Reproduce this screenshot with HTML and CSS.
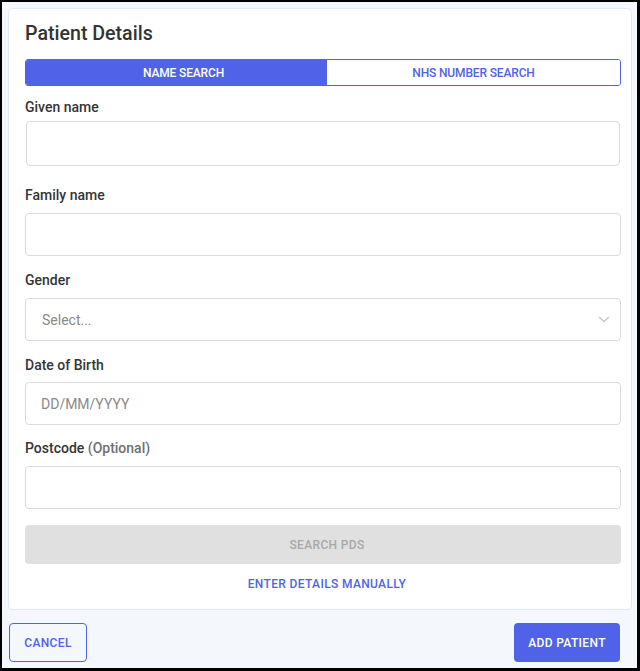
FILE: index.html
```html
<!DOCTYPE html>
<html>
<head>
<meta charset="utf-8">
<link rel="stylesheet" href="styles.css">
</head>
<body>
<div class="frame">
  <div class="card">
    <h1 class="title">Patient Details</h1>
    <div class="toggle">
      <div class="tab tab-active">NAME SEARCH</div>
      <div class="tab">NHS NUMBER SEARCH</div>
    </div>
    <div class="field field-first">
      <div class="label label-tight">Given name</div>
      <div class="input input-tall"></div>
    </div>
    <div class="field field-wide">
      <div class="label">Family name</div>
      <div class="input"></div>
    </div>
    <div class="field">
      <div class="label">Gender</div>
      <div class="input select">
        <span class="placeholder">Select...</span>
        <svg class="chev" width="12" height="8" viewBox="0 0 12 8"><polyline points="1.5,1.5 6,5.5 10.5,1.5" fill="none" stroke="#c9c9c9" stroke-width="1.6" stroke-linecap="round" stroke-linejoin="round"/></svg>
      </div>
    </div>
    <div class="field">
      <div class="label label-dob">Date of Birth</div>
      <div class="input"><span class="placeholder ph-dob">DD/MM/YYYY</span></div>
    </div>
    <div class="field field-post">
      <div class="label">Postcode <span class="optional">(Optional)</span></div>
      <div class="input"></div>
    </div>
    <div class="search-btn">SEARCH PDS</div>
    <div class="manual">ENTER DETAILS MANUALLY</div>
  </div>
  <div class="footer">
    <div class="btn btn-outline">CANCEL</div>
    <div class="btn btn-primary">ADD PATIENT</div>
  </div>
</div>
</body>
</html>
```

FILE: styles.css
```css
* { box-sizing: border-box; }
html, body { margin: 0; padding: 0; }
body {
  font-family: Roboto, "Liberation Sans", Arial, sans-serif;
  width: 640px;
  height: 671px;
}
.frame {
  width: 640px;
  height: 671px;
  border-style: solid;
  border-color: #000;
  border-width: 2px 3px 3px 2px;
  background: #f4f7fc;
  display: flex;
  flex-direction: column;
}
.card {
  margin: 6px 5px 0 6px;
  background: #fff;
  border: 1px solid #e3e8f0;
  border-radius: 5px;
  padding: 13px 10px 18px 16px;
  display: flex;
  flex-direction: column;
}
.title {
  margin: 0;
  font-size: 19.6px;
  line-height: 24px;
  font-weight: 500;
  color: #333;
}
.toggle {
  margin-top: 13px;
  height: 27px;
  display: flex;
  border: 1px solid #5063e8;
  border-radius: 3px;
  overflow: hidden;
}
.tab {
  flex: 1 1 0;
  display: flex;
  align-items: center;
  justify-content: center;
  font-size: 12px;
  font-weight: 500;
  letter-spacing: -0.15px;
  color: #5063e8;
  background: #fff;
}
.tab-active {
  flex: 0 0 301px;
  padding-left: 14px;
  background: #5063e8;
  color: #fff;
}
.field { margin-top: 14px; display: flex; flex-direction: column; }
.field-first { margin-top: 11px; }
.field-wide { margin-top: 19px; }
.field-post { margin-top: 13px; }
.label {
  font-size: 14px;
  line-height: 20px;
  font-weight: 500;
  color: #353535;
  margin-bottom: 8px;
}
.label-tight { margin-bottom: 4px; }
.label-dob { margin-bottom: 7px; }
.optional { color: #707070; }
.input {
  height: 43px;
  border: 1px solid #dadada;
  border-radius: 4px;
  background: #fff;
  display: flex;
  align-items: center;
  padding: 0 14px 0 16px;
}
.input-tall { height: 45px; margin: 0 1px 0 1px; }
.placeholder { font-size: 14px; color: #8a8a8a; }
.ph-dob { margin-left: -1px; }
.select { justify-content: space-between; padding-right: 10px; }
.chev { display: block; }
.search-btn {
  margin-top: 16px;
  height: 39px;
  padding-left: 8px;
  background: #e0e0e0;
  border-radius: 4px;
  display: flex;
  align-items: center;
  justify-content: center;
  font-size: 12px;
  font-weight: 500;
  letter-spacing: 0.35px;
  color: #a8a8a8;
}
.manual {
  margin-top: 12px;
  padding-left: 8px;
  text-align: center;
  font-size: 12px;
  line-height: 16px;
  font-weight: 500;
  letter-spacing: 0.35px;
  color: #5063e8;
  margin-bottom: -1px;
}
.footer {
  margin: 13px 17px 0 7px;
  display: flex;
  justify-content: space-between;
}
.btn {
  height: 39px;
  border-radius: 4px;
  display: flex;
  align-items: center;
  justify-content: center;
  font-size: 12px;
  font-weight: 500;
  letter-spacing: 0.35px;
}
.btn-outline {
  width: 78px;
  border: 1px solid #5063e8;
  color: #5063e8;
  background: transparent;
}
.btn-primary {
  width: 106px;
  background: #5063e8;
  color: #fff;
}
```
